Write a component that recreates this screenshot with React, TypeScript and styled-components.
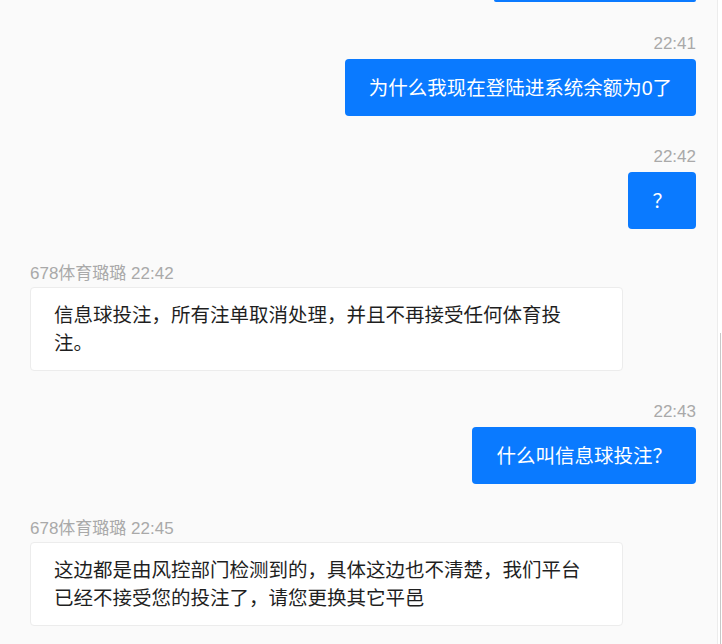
import React from "react";
import styled, { createGlobalStyle } from "styled-components";

type Msg =
  | { id: number; side: "me"; time: string; text: string }
  | { id: number; side: "them"; name: string; time: string; text: string };

const messages: Msg[] = [
  { id: 1, side: "me", time: "22:41", text: "为什么我现在登陆进系统余额为0了" },
  { id: 2, side: "me", time: "22:42", text: "？" },
  {
    id: 3,
    side: "them",
    name: "678体育璐璐",
    time: "22:42",
    text: "信息球投注，所有注单取消处理，并且不再接受任何体育投注。",
  },
  { id: 4, side: "me", time: "22:43", text: "什么叫信息球投注？" },
  {
    id: 5,
    side: "them",
    name: "678体育璐璐",
    time: "22:45",
    text: "这边都是由风控部门检测到的，具体这边也不清楚，我们平台已经不接受您的投注了，请您更换其它平邑",
  },
];

const App = () => {
  return (
    <>
      <GlobalStyle />
      <Window>
        <Pane>
          <ClippedBubble />
          {messages.map((m) =>
            m.side === "me" ? (
              <Group key={m.id} $side="me">
                <Meta $side="me">{m.time}</Meta>
                <Bubble $side="me">{m.text}</Bubble>
              </Group>
            ) : (
              <Group key={m.id} $side="them">
                <Meta $side="them">
                  {m.name} {m.time}
                </Meta>
                <Bubble $side="them">{m.text}</Bubble>
              </Group>
            )
          )}
        </Pane>
        <ScrollThumb />
      </Window>
    </>
  );
};

export default App;

const GlobalStyle = createGlobalStyle`
  html, body {
    margin: 0;
    padding: 0;
    background: #ffffff;
  }
  * {
    box-sizing: border-box;
  }
`;

const Window = styled.div`
  position: relative;
  width: 722px;
  height: 644px;
  overflow: hidden;
  display: flex;
  background: #ffffff;
`;

const Pane = styled.div`
  width: 718px;
  height: 644px;
  background: #fafafa;
  border-right: 1px solid #ececec;
  padding: 0 21px 0 30px;
  display: flex;
  flex-direction: column;
  font-family: "Liberation Sans", "Noto Sans CJK SC", sans-serif;
`;

const ClippedBubble = styled.div`
  align-self: flex-end;
  width: 202px;
  height: 2px;
  background: #0a7aff;
  border-radius: 0 0 3px 3px;
  flex-shrink: 0;
`;

const Group = styled.div<{ $side: "me" | "them" }>`
  display: flex;
  flex-direction: column;
  align-items: ${(p) => (p.$side === "me" ? "flex-end" : "flex-start")};
  margin-top: ${(p) => (p.$side === "me" ? "31px" : "35px")};
  flex-shrink: 0;

  &:nth-child(2) {
    margin-top: 32px;
  }
`;

const Meta = styled.div<{ $side: "me" | "them" }>`
  font-size: 17px;
  line-height: 20px;
  color: #a9a9a9;
  margin-bottom: ${(p) => (p.$side === "me" ? "5px" : "3px")};
  white-space: nowrap;
`;

const Bubble = styled.div<{ $side: "me" | "them" }>`
  max-width: 593px;
  font-size: 19.5px;
  line-height: 28px;
  border-radius: 4px;
  word-break: break-all;
  ${(p) =>
    p.$side === "me"
      ? `
    background: #0a7aff;
    color: #ffffff;
    padding: 14.5px 24px;
  `
      : `
    background: #ffffff;
    color: #1f1f1f;
    border: 1px solid #ececec;
    padding: 13px 23px;
  `}
`;

const ScrollThumb = styled.div`
  position: absolute;
  right: 1px;
  top: 333px;
  width: 1px;
  height: 311px;
  background: #c8c8c8;
`;
